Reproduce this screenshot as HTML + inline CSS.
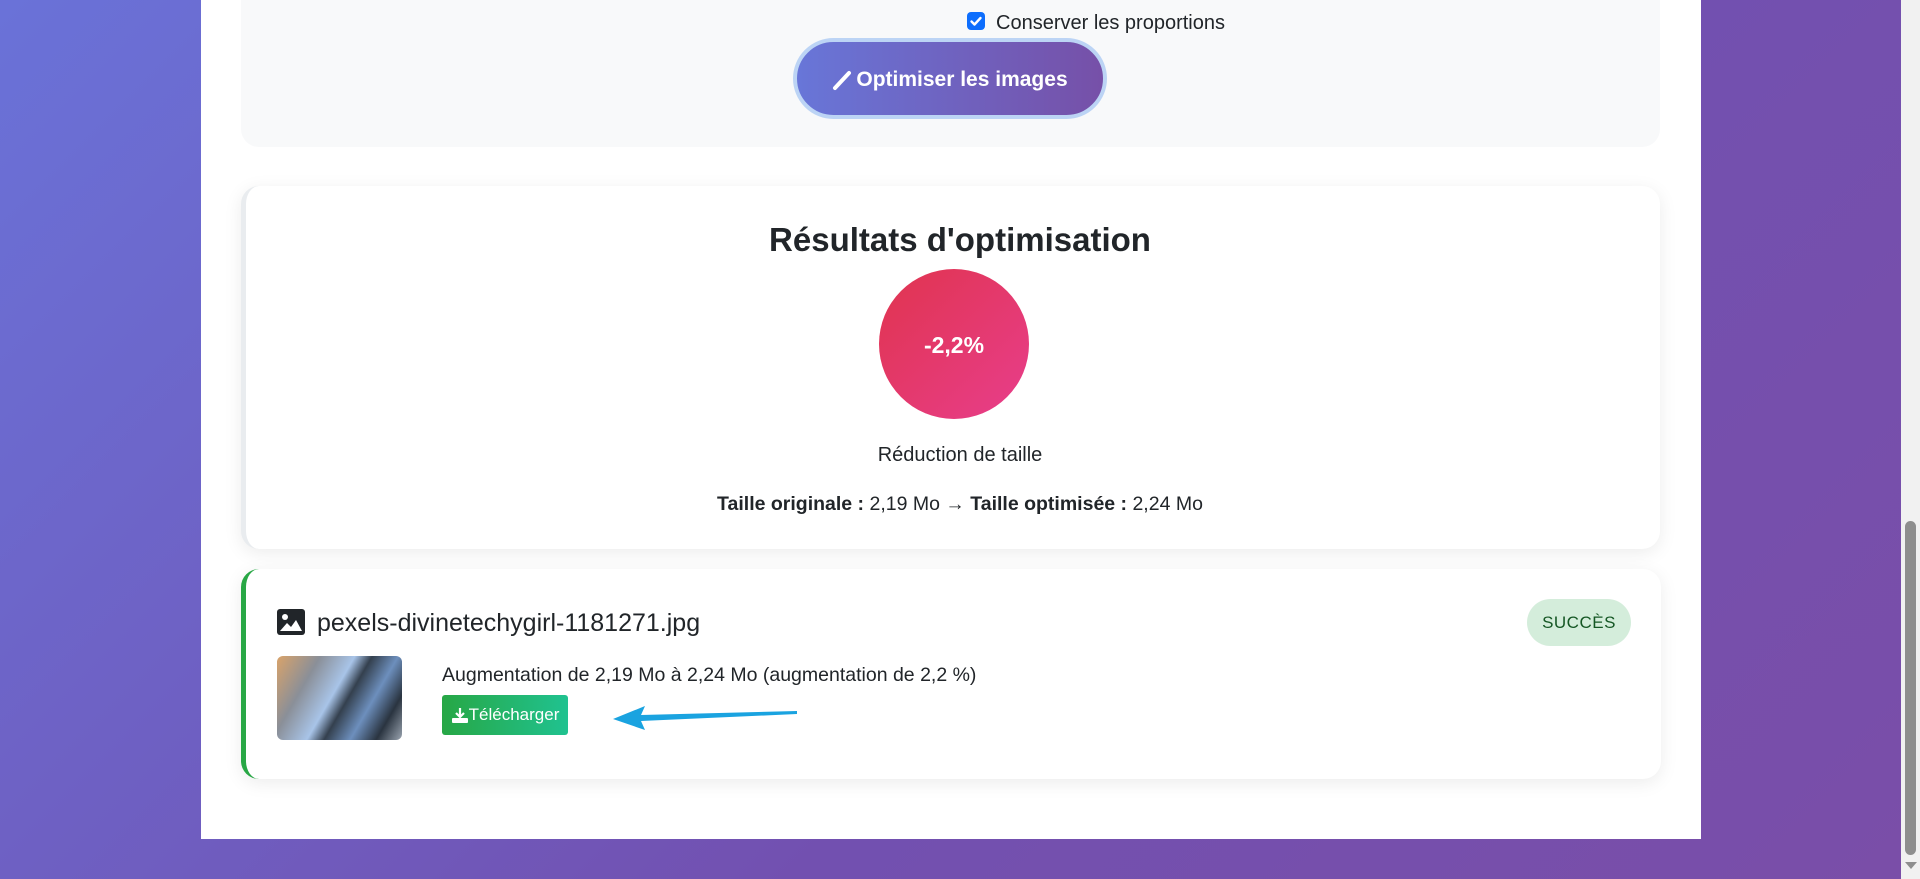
<!DOCTYPE html>
<html><head><meta charset="utf-8"><style>
*{box-sizing:border-box;margin:0;padding:0}
html,body{width:1920px;height:879px;overflow:hidden}
body{font-family:"Liberation Sans","DejaVu Sans",sans-serif;color:#212529;background:linear-gradient(135deg,#6a72d8 0%,#7250b0 60%,#7a4ea8 100%);position:relative}
.panel{position:absolute;left:201px;top:0;width:1500px;height:839px;background:#fff}
.gray{position:absolute;left:241px;top:-20px;width:1419px;height:167px;background:#f8f9fa;border-radius:18px}
.chk{position:absolute;left:967px;top:12px;width:18px;height:18px;background:#0d6efd;border-radius:4px}
.chklbl{position:absolute;left:996px;top:12px;font-size:20px;color:#212529}
.btn{position:absolute;left:793px;top:38px;width:314px;height:81px;border-radius:41px;border:4px solid #bcd4f5;background:linear-gradient(90deg,#6876d8,#7650a8);color:#fff;font-weight:bold;font-size:21px;display:flex;align-items:center;justify-content:center;gap:2px;padding-top:2px}
.card{position:absolute;background:#fff;border-radius:18px;box-shadow:0 4px 18px rgba(0,0,0,.08)}
.res{left:241px;top:186px;width:1419px;height:363px;border-left:5px solid #e9ecef}
.title{position:absolute;left:0;right:0;top:221px;font-size:33px;font-weight:bold;text-align:center;color:#212529}
.circle{position:absolute;left:879px;top:269px;width:150px;height:150px;border-radius:50%;background:linear-gradient(135deg,#e0344e,#e83e8c);color:#fff;font-weight:bold;font-size:23px;display:flex;align-items:center;justify-content:center;padding-top:2px}
.t1{position:absolute;left:0;right:0;top:444px;font-size:20px;text-align:center}
.t2{position:absolute;left:0;right:0;top:493px;font-size:19.5px;text-align:center}
.file{left:241px;top:569px;width:1420px;height:210px;border-left:5px solid #28a745}
.fname{position:absolute;left:317px;top:609px;font-size:25px;color:#212529}
.badge{position:absolute;left:1527px;top:599px;width:104px;height:47px;border-radius:24px;background:#d4eddb;color:#155724;font-size:17px;display:flex;align-items:center;justify-content:center;letter-spacing:.5px}
.thumb{position:absolute;left:277px;top:656px;width:125px;height:84px;border-radius:6px;background:linear-gradient(120deg,#d9a36a 0%,#8a8f98 25%,#a8c4e8 45%,#34404e 55%,#6d8fbd 70%,#2a3440 85%,#9aa4b0 100%)}
.aug{position:absolute;left:442px;top:664px;font-size:19.5px}
.dl{position:absolute;left:442px;top:695px;width:126px;height:40px;border-radius:3px;background:linear-gradient(90deg,#27a745,#20c290);color:#fff;font-size:17px;display:flex;align-items:center;justify-content:center}
.sb{position:absolute;left:1901px;top:0;width:19px;height:879px;background:#f1f1f1}
.thumbsb{position:absolute;left:1905px;top:521px;width:11px;height:334px;background:#8e8e8e;border-radius:6px}
</style></head><body>
<div class="panel"></div>
<div class="gray"></div>
<div class="chk"><svg width="18" height="18" viewBox="0 0 18 18"><path d="M4.5 9.5l3 3 6-6.5" stroke="#fff" stroke-width="2.4" fill="none" stroke-linecap="round" stroke-linejoin="round"/></svg></div>
<div class="chklbl">Conserver les proportions</div>
<div class="btn"><svg width="22" height="22" viewBox="0 0 22 22"><path d="M3 19L17 4" stroke="#fff" stroke-width="4" stroke-linecap="round"/></svg>Optimiser les images</div>
<div class="card res"></div>
<div class="title">Résultats d'optimisation</div>
<div class="circle">-2,2%</div>
<div class="t1">Réduction de taille</div>
<div class="t2"><b>Taille originale :</b> 2,19 Mo → <b>Taille optimisée :</b> 2,24 Mo</div>
<div class="card file"></div>
<svg style="position:absolute;left:277px;top:609px" width="28" height="26" viewBox="0 0 28 26"><rect x="0" y="0" width="28" height="26" rx="3" fill="#212529"/><circle cx="8" cy="8" r="3" fill="#fff"/><path d="M3 22l7-8 4 4 5-7 6 11z" fill="#fff"/></svg>
<div class="fname">pexels-divinetechygirl-1181271.jpg</div>
<div class="badge">SUCCÈS</div>
<div class="thumb"></div>
<div class="aug">Augmentation de 2,19 Mo à 2,24 Mo (augmentation de 2,2 %)</div>
<div class="dl"><svg width="18" height="18" viewBox="0 0 18 18"><path d="M9 2v8M5 7l4 4 4-4" stroke="#fff" stroke-width="2.2" fill="none"/><rect x="1" y="12" width="16" height="5" rx="1" fill="#fff"/></svg>Télécharger</div>
<svg style="position:absolute;left:605px;top:700px" width="200" height="36" viewBox="0 0 200 36"><path d="M8 19L40 6L36 15L192 11L192 14L36 21L40 30Z" fill="#1aa3e0"/></svg>
<div class="sb"></div><div class="thumbsb"></div>
<svg style="position:absolute;left:1905px;top:862px" width="12" height="8"><path d="M0 0h12L6 7z" fill="#8e8e8e"/></svg>
</body></html>
